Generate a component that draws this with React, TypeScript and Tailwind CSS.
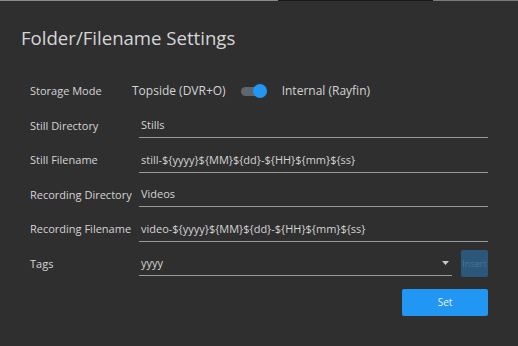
import React, { useState } from "react";

const rows = [
  { label: "Still Directory", value: "Stills" },
  { label: "Still Filename", value: "still-${yyyy}${MM}${dd}-${HH}${mm}${ss}" },
  { label: "Recording Directory", value: "Videos" },
  { label: "Recording Filename", value: "video-${yyyy}${MM}${dd}-${HH}${mm}${ss}" },
];

export default function App() {
  const [internal, setInternal] = useState(true);

  return (
    <div
      className="w-[518px] h-[346px] bg-[#2f2f2f] text-[#d4d4d4] overflow-hidden flex flex-col"
      style={{ fontFamily: '"Open Sans", "Noto Sans", sans-serif' }}
    >
      {/* top edge */}
      <div className="h-px flex shrink-0">
        <div className="w-[278px] bg-[#8a8a8a]" />
        <div className="w-[155px] bg-[#1a1a1a]" />
        <div className="flex-1 bg-[#7a7a7a]" />
      </div>

      <h1 className="pl-[21px] pt-[24px] h-[73px] text-[18.6px] leading-[26px] text-[#d6d6d6]">
        Folder/Filename Settings
      </h1>

      <div className="pl-[30px] pr-[30px] text-[11px]">
        {/* Storage mode */}
        <div className="h-[34.5px] flex items-center">
          <div className="w-[102px]">Storage Mode</div>
          <span className="text-[12px]">Topside (DVR+O)</span>
          <button
            onClick={() => setInternal(!internal)}
            className="relative ml-[15px] w-[26px] h-[16px] flex items-center"
          >
            <span className="block w-[22px] h-[9px] rounded-full bg-[#5d666d]" />
            <span
              className={`absolute top-[1px] w-[14px] h-[14px] rounded-full bg-[#2196f3] ${
                internal ? "left-[12px]" : "left-[-3px]"
              }`}
            />
          </button>
          <span className="ml-[15px] text-[12px]">Internal (Rayfin)</span>
        </div>

        {rows.map((r) => (
          <div key={r.label} className="h-[34.5px] flex items-center">
            <div className="w-[109px] whitespace-nowrap">{r.label}</div>
            <div className="w-[349px] h-[25px] border-b border-[#9a9a9a] flex items-center pl-[2px] whitespace-nowrap">
              {r.value}
            </div>
          </div>
        ))}

        {/* Tags */}
        <div className="h-[34.5px] flex items-center">
          <div className="w-[109px]">Tags</div>
          <div className="w-[313px] h-[25px] border-b border-[#9a9a9a] flex items-center pl-[2px] pr-[2px]">
            <span className="flex-1">yyyy</span>
            <svg width="7" height="4" viewBox="0 0 7 4" className="mr-[1px]">
              <path d="M0 0h7L3.5 4z" fill="#c8c8c8" />
            </svg>
          </div>
          <button className="ml-[9px] w-[27px] h-[27px] rounded-[2px] bg-[#2b577a] text-[9px] text-[#46769c] flex items-center justify-center overflow-hidden">
            Insert
          </button>
        </div>

        <div className="flex justify-end pt-[8px]">
          <button className="w-[86px] h-[27px] rounded-[2px] bg-[#2196f3] text-[10px] text-[#e6f2ff]">
            Set
          </button>
        </div>
      </div>
    </div>
  );
}
